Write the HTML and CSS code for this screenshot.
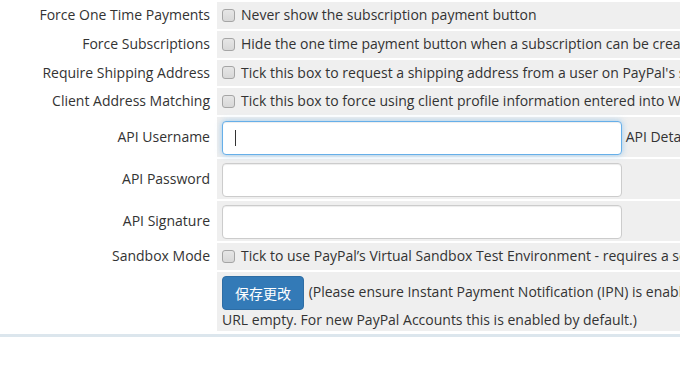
FILE: index.html
```html
<!DOCTYPE html>
<html>
<head>
<meta charset="utf-8">
<link rel="stylesheet" href="styles.css">
</head>
<body>
<div class="page">
<table class="form">
  <tr>
    <td class="fieldlabel">Force One Time Payments</td>
    <td class="fieldarea"><label class="check"><input type="checkbox" class="cb"> Never show the subscription payment button</label></td>
  </tr>
  <tr>
    <td class="fieldlabel">Force Subscriptions</td>
    <td class="fieldarea"><label class="check"><input type="checkbox" class="cb"> Hide the one time payment button when a subscription can be created</label></td>
  </tr>
  <tr>
    <td class="fieldlabel">Require Shipping Address</td>
    <td class="fieldarea"><label class="check"><input type="checkbox" class="cb"> Tick this box to request a shipping address from a user on PayPal's site</label></td>
  </tr>
  <tr>
    <td class="fieldlabel">Client Address Matching</td>
    <td class="fieldarea"><label class="check"><input type="checkbox" class="cb"> Tick this box to force using client profile information entered into WHMCS at PayPal</label></td>
  </tr>
  <tr>
    <td class="fieldlabel">API Username</td>
    <td class="fieldarea inputrow"><span class="field"><input type="text" class="text focus"><span class="caret"></span></span> API Details are only required for refunds</td>
  </tr>
  <tr>
    <td class="fieldlabel">API Password</td>
    <td class="fieldarea inputrow"><span class="field"><input type="text" class="text"></span></td>
  </tr>
  <tr>
    <td class="fieldlabel">API Signature</td>
    <td class="fieldarea inputrow"><span class="field"><input type="text" class="text"></span></td>
  </tr>
  <tr>
    <td class="fieldlabel">Sandbox Mode</td>
    <td class="fieldarea"><label class="check"><input type="checkbox" class="cb"> Tick to use PayPal’s Virtual Sandbox Test Environment - requires a separate Sandbox Account</label></td>
  </tr>
  <tr>
    <td class="fieldlabel"></td>
    <td class="fieldarea savecell"><span class="line1"><button class="btn">保存更改</button> (Please ensure Instant Payment Notification (IPN) is enabled in your PayPal account, or leave the Notification</span><br>URL empty. For new PayPal Accounts this is enabled by default.)</td>
  </tr>
</table>
<div class="rule"></div>
</div>
</body>
</html>
```
FILE: styles.css
```css
html, body {
  margin: 0;
  padding: 0;
  background: #fff;
  overflow: hidden;
}
body {
  font-family: "Open Sans", "Noto Sans CJK SC", sans-serif;
  font-size: 14px;
  line-height: 18.75px;
  color: #333;
}
.page {
  width: 680px;
  overflow: hidden;
}
.form {
  border-spacing: 2px;
  width: 1100px;
}
.form td {
  padding: 4px 5px;
  vertical-align: middle;
}
.fieldlabel {
  width: 203px;
  text-align: right;
  white-space: nowrap;
  background: #fff;
}
.fieldarea {
  background: #efefef;
  white-space: nowrap;
}
.inputrow {
  padding-top: 4px !important;
  padding-bottom: 2px !important;
}
.check {
  display: flex;
  align-items: center;
  gap: 6px;
}
.cb {
  appearance: none;
  -webkit-appearance: none;
  width: 13px;
  height: 13px;
  margin: 0;
  border: 1px solid #a5a5a5;
  border-radius: 3px;
  background: linear-gradient(#e6e6e6, #d8d8d8);
  box-sizing: border-box;
  flex: none;
}
.field {
  position: relative;
  display: inline-block;
  vertical-align: middle;
}
.text {
  display: block;
  width: 400px;
  height: 34px;
  box-sizing: border-box;
  border: 1px solid #ccc;
  border-radius: 4px;
  background: #fff;
  padding: 6px 12px;
  margin: 0;
  font: inherit;
  box-shadow: inset 0 1px 1px rgba(0,0,0,0.075);
  outline: none;
}
.text.focus {
  border-color: #66afe9;
  box-shadow: inset 0 1px 1px rgba(0,0,0,0.075), 0 0 6px rgba(102,175,233,0.6);
}
.caret {
  position: absolute;
  left: 13px;
  top: 9px;
  width: 1px;
  height: 16px;
  background: #333;
}
.savecell {
  padding-top: 4px !important;
  padding-bottom: 1px !important;
  line-height: 20px;
}
.btn {
  display: inline-block;
  vertical-align: middle;
  height: 34px;
  padding: 6px 12px;
  border: 1px solid #2e6da4;
  border-radius: 4px;
  background: #337ab7;
  color: #fff;
  font-family: "Noto Sans CJK SC", "Open Sans", sans-serif;
  font-size: 14px;
  line-height: 20px;
  margin: 0 1px 0 0;
}
.rule {
  height: 3px;
  margin-top: 1px;
  background: #dce6ed;
}
```
